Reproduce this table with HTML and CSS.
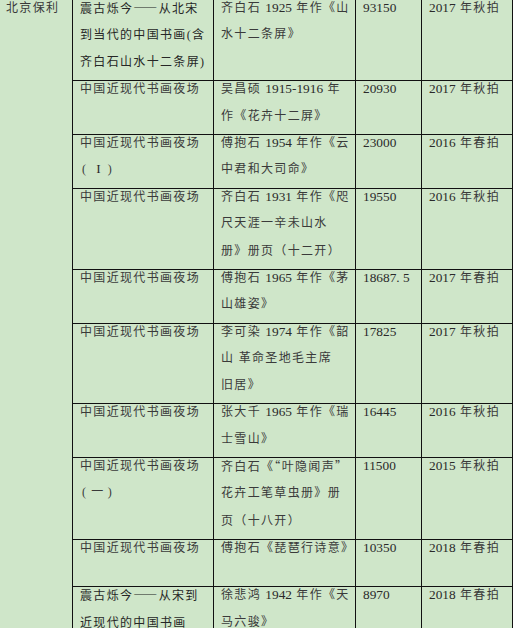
FILE: index.html
```html
<!DOCTYPE html>
<html lang="zh-CN">
<head>
<meta charset="utf-8">
<title>拍卖记录</title>
<link rel="stylesheet" href="styles.css">
</head>
<body>
<table class="sheet">
  <colgroup>
    <col class="w1"><col class="w2"><col class="w3"><col class="w4"><col class="w5">
  </colgroup>
  <tr class="first">
    <td class="house" rowspan="10"><div class="c">北京保利</div></td>
    <td><div class="c dark">震古烁今<span class="cj">——</span>从北宋<br>到当代的中国书画(含<br>齐白石山水十二条屏)</div></td>
    <td><div class="c">齐白石 <span class="n">1925</span> 年作《山<br>水十二条屏》</div></td>
    <td><div class="c"><span class="n">93150</span></div></td>
    <td><div class="c"><span class="n">2017</span> 年秋拍</div></td>
  </tr>
  <tr>
    <td><div class="c">中国近现代书画夜场</div></td>
    <td><div class="c">吴昌硕 <span class="n">1915-1916</span> 年<br>作《花卉十二屏》</div></td>
    <td><div class="c"><span class="n">20930</span></div></td>
    <td><div class="c"><span class="n">2017</span> 年秋拍</div></td>
  </tr>
  <tr>
    <td><div class="c">中国近现代书画夜场<br><span class="lp">(</span><span class="n">I</span><span class="rp">)</span></div></td>
    <td><div class="c">傅抱石 <span class="n">1954</span> 年作《云<br>中君和大司命》</div></td>
    <td><div class="c"><span class="n">23000</span></div></td>
    <td><div class="c"><span class="n">2016</span> 年春拍</div></td>
  </tr>
  <tr>
    <td><div class="c">中国近现代书画夜场</div></td>
    <td><div class="c">齐白石 <span class="n">1931</span> 年作《咫<br>尺天涯一辛未山水<br>册》册页<span class="cj">（</span>十二开<span class="cj">）</span></div></td>
    <td><div class="c"><span class="n">19550</span></div></td>
    <td><div class="c"><span class="n">2016</span> 年秋拍</div></td>
  </tr>
  <tr>
    <td><div class="c">中国近现代书画夜场</div></td>
    <td><div class="c">傅抱石 <span class="n">1965</span> 年作《茅<br>山雄姿》</div></td>
    <td><div class="c"><span class="n">18687. 5</span></div></td>
    <td><div class="c"><span class="n">2017</span> 年春拍</div></td>
  </tr>
  <tr>
    <td><div class="c">中国近现代书画夜场</div></td>
    <td><div class="c">李可染 <span class="n">1974</span> 年作《韶<br>山 革命圣地毛主席<br>旧居》</div></td>
    <td><div class="c"><span class="n">17825</span></div></td>
    <td><div class="c"><span class="n">2017</span> 年秋拍</div></td>
  </tr>
  <tr>
    <td><div class="c">中国近现代书画夜场</div></td>
    <td><div class="c">张大千 <span class="n">1965</span> 年作《瑞<br>士雪山》</div></td>
    <td><div class="c"><span class="n">16445</span></div></td>
    <td><div class="c"><span class="n">2016</span> 年秋拍</div></td>
  </tr>
  <tr>
    <td><div class="c">中国近现代书画夜场<br><span class="lp2">(</span>一<span class="rp2">)</span></div></td>
    <td><div class="c">齐白石<span class="cj">《“</span>叶隐闻声<span class="cj">”</span><br>花卉工笔草虫册》册<br>页<span class="cj">（</span>十八开<span class="cj">）</span></div></td>
    <td><div class="c"><span class="n">11500</span></div></td>
    <td><div class="c"><span class="n">2015</span> 年秋拍</div></td>
  </tr>
  <tr class="short">
    <td><div class="c">中国近现代书画夜场</div></td>
    <td><div class="c">傅抱石《琵琶行诗意》</div></td>
    <td><div class="c"><span class="n">10350</span></div></td>
    <td><div class="c"><span class="n">2018</span> 年春拍</div></td>
  </tr>
  <tr>
    <td><div class="c dark">震古烁今<span class="cj">——</span>从宋到<br>近现代的中国书画</div></td>
    <td><div class="c">徐悲鸿 <span class="n">1942</span> 年作《天<br>马六骏》</div></td>
    <td><div class="c"><span class="n">8970</span></div></td>
    <td><div class="c"><span class="n">2018</span> 年春拍</div></td>
  </tr>
</table>
</body>
</html>
```

FILE: styles.css
```css
html, body {
  margin: 0;
  padding: 0;
  background: #cfe6c9;
  overflow: hidden;
}

.sheet {
  border-collapse: collapse;
  table-layout: fixed;
  width: 513px;
  background: #cfe6c9;
  font-family: "Liberation Serif", "Noto Sans CJK SC", serif;
  font-size: 12px;
  letter-spacing: 1.33px;
  color: #3a3a3a;
}

.w1 { width: 72.5px; }
.w2 { width: 141px; }
.w3 { width: 142px; }
.w4 { width: 66px; }
.w5 { width: 91px; }

.sheet td {
  border: 1px solid #111;
  padding: 0 5px 0 7px;
  vertical-align: top;
  line-height: 26.4px;
  white-space: nowrap;
}

.sheet .first td { border-top: none; }

.sheet td.house {
  border-left: none;
  padding-left: 6px;
}

.sheet .short td { height: 46px; }

.c {
  margin: -5px 0 5px;
}

.dark { color: #262626; }

.n {
  font-size: 13.33px;
  letter-spacing: 0;
  color: #2a2a2a;
}

.cj {
  font-family: "Noto Sans CJK SC", sans-serif;
}

.lp { margin: 0 9px 0 2px; }
.rp { margin-left: 7px; }
.lp2 { margin: 0 4px 0 2px; }
.rp2 { margin-left: 3px; }
```
